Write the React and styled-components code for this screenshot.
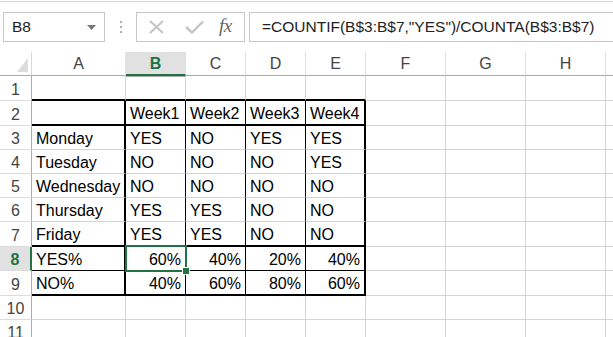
import styled, { createGlobalStyle } from "styled-components";

const GREEN = "#217346";
const GRID = "#d4d4d4";

const GlobalStyle = createGlobalStyle`
  html, body {
    margin: 0;
    padding: 0;
    background: #ffffff;
    overflow: hidden;
  }
  body {
    font-family: "Liberation Sans", Arial, sans-serif;
  }
`;

const columns = [
  { name: "A", width: 94 },
  { name: "B", width: 60 },
  { name: "C", width: 60 },
  { name: "D", width: 60 },
  { name: "E", width: 60 },
  { name: "F", width: 80 },
  { name: "G", width: 80 },
  { name: "H", width: 80 },
  { name: "", width: 40 },
];

const rowHeights = [25, 25, 24, 24, 24, 24, 25, 24, 25, 24, 24];

const data = {
  2: ["", "Week1", "Week2", "Week3", "Week4"],
  3: ["Monday", "YES", "NO", "YES", "YES"],
  4: ["Tuesday", "NO", "NO", "NO", "YES"],
  5: ["Wednesday", "NO", "NO", "NO", "NO"],
  6: ["Thursday", "YES", "YES", "NO", "NO"],
  7: ["Friday", "YES", "YES", "NO", "NO"],
  8: ["YES%", "60%", "40%", "20%", "40%"],
  9: ["NO%", "40%", "60%", "80%", "60%"],
};

function bottomBorder(row, col) {
  if (col > 4) return "grid";
  if (row === 1 || row === 2 || row === 7 || row === 9) return "thick";
  if (row === 8) return "thin";
  return "grid";
}

function rightBorder(row, col) {
  if (row < 2 || row > 9) return "grid";
  if (col === 0 || col === 4) return "thick";
  if (col < 4) return "thin";
  return "grid";
}

const borderValue = {
  grid: `1px solid ${GRID}`,
  thin: "1px solid #000000",
  thick: "2px solid #000000",
};

export default function App() {
  return (
    <>
      <GlobalStyle />
      <Page>
        <FormulaBar>
          <NameBox>
            <span>B8</span>
            <svg width="9" height="5" viewBox="0 0 9 5">
              <path d="M0 0 L9 0 L4.5 5 Z" fill="#777" />
            </svg>
          </NameBox>
          <Grip>
            <i />
            <i />
            <i />
          </Grip>
          <ButtonGroup>
            <svg width="17" height="14" viewBox="0 0 17 14">
              <path d="M2 1 L15 13 M15 1 L2 13" stroke="#c3c3c3" strokeWidth="2" fill="none" />
            </svg>
            <svg width="19" height="14" viewBox="0 0 19 14">
              <path d="M1 7 L7 12.5 L18 1.5" stroke="#c3c3c3" strokeWidth="2.4" fill="none" />
            </svg>
            <Fx>fx</Fx>
          </ButtonGroup>
          <FormulaInput>=COUNTIF(B$3:B$7,"YES")/COUNTA(B$3:B$7)</FormulaInput>
        </FormulaBar>

        <Sheet $cols={columns.map((c) => `${c.width}px`).join(" ")} $rows={rowHeights.map((h) => `${h}px`).join(" ")}>
          <Corner>
            <svg width="11" height="14" viewBox="0 0 11 14">
              <path d="M11 0 L11 14 L0 14 Z" fill="#dcdcdc" />
            </svg>
          </Corner>
          {columns.map((c) => (
            <ColHeader key={c.name + "h"} $active={c.name === "B"}>
              {c.name}
            </ColHeader>
          ))}

          {rowHeights.map((_, i) => {
            const row = i + 1;
            return [
              <RowHeader key={"r" + row} $active={row === 8}>
                {row}
              </RowHeader>,
              ...columns.map((c, col) => {
                const value = data[row] && col < 5 ? data[row][col] : "";
                const isPercent = value.endsWith("%") && col > 0;
                return (
                  <Cell
                    key={row + "-" + col}
                    $right={borderValue[rightBorder(row, col)]}
                    $bottom={borderValue[bottomBorder(row, col)]}
                    $align={isPercent ? "flex-end" : "flex-start"}
                  >
                    {value}
                    {row === 8 && col === 1 && (
                      <Selection>
                        <Handle />
                      </Selection>
                    )}
                  </Cell>
                );
              }),
            ];
          })}
        </Sheet>
      </Page>
    </>
  );
}

const Page = styled.div`
  width: 613px;
  height: 337px;
  overflow: hidden;
  border-top: 1px solid #d6d6d6;
  margin-top: 1px;
  box-sizing: border-box;
`;

const FormulaBar = styled.div`
  display: flex;
  align-items: center;
  height: 50px;
  padding: 9px 0 9px 3px;
  box-sizing: border-box;
  font-size: 15.5px;
  color: #222222;
`;

const NameBox = styled.div`
  display: flex;
  align-items: center;
  justify-content: space-between;
  width: 102px;
  height: 30px;
  box-sizing: border-box;
  border: 1px solid #c6c6c6;
  padding: 0 8px 1px 8px;

  svg {
    margin-top: 2px;
  }
`;

const Grip = styled.div`
  display: flex;
  flex-direction: column;
  align-items: center;
  gap: 3px;
  width: 31px;

  i {
    display: block;
    width: 2px;
    height: 2px;
    background: #b0b0b0;
  }
`;

const ButtonGroup = styled.div`
  display: flex;
  align-items: center;
  width: 109px;
  height: 30px;
  box-sizing: border-box;
  border: 1px solid #c6c6c6;
  padding: 0 0 0 11px;

  svg:first-child {
    margin-right: 20px;
  }
  svg:nth-child(2) {
    margin-right: 15px;
  }
`;

const Fx = styled.span`
  font-family: "Liberation Serif", "Times New Roman", serif;
  font-style: italic;
  font-size: 19px;
  color: #666666;
  letter-spacing: -0.5px;
  margin-top: -2px;
`;

const FormulaInput = styled.div`
  flex: 1;
  display: flex;
  align-items: center;
  height: 30px;
  box-sizing: border-box;
  margin-left: 4px;
  border: 1px solid #c6c6c6;
  border-right: none;
  padding: 0 0 1px 12px;
  white-space: nowrap;
  overflow: hidden;
`;

const Sheet = styled.div`
  display: grid;
  grid-template-columns: 32px ${(p) => p.$cols};
  grid-template-rows: 24px ${(p) => p.$rows};
  font-size: 16px;
  color: #000000;
`;

const Corner = styled.div`
  display: flex;
  align-items: flex-end;
  justify-content: flex-end;
  padding: 0 3px 3px 0;
  border-bottom: 1px solid #ababab;
  border-right: 1px solid #d8d8d8;
`;

const ColHeader = styled.div`
  display: flex;
  align-items: center;
  justify-content: center;
  box-sizing: border-box;
  font-size: 16px;
  padding-top: 1px;
  color: ${(p) => (p.$active ? GREEN : "#444444")};
  font-weight: ${(p) => (p.$active ? 700 : 400)};
  background: ${(p) => (p.$active ? "#e1e1e1" : "#ffffff")};
  border-right: 1px solid #e0e0e0;
  border-bottom: ${(p) => (p.$active ? `2px solid ${GREEN}` : "1px solid #ababab")};
  box-shadow: ${(p) => (p.$active ? "0 1px 0 #ababab" : "none")};
`;

const RowHeader = styled.div`
  display: flex;
  align-items: flex-end;
  justify-content: center;
  box-sizing: border-box;
  padding-bottom: 1px;
  line-height: 18px;
  font-size: 16px;
  color: ${(p) => (p.$active ? GREEN : "#444444")};
  font-weight: ${(p) => (p.$active ? 700 : 400)};
  background: ${(p) => (p.$active ? "#e1e1e1" : "#ffffff")};
  border-bottom: 1px solid #dcdcdc;
  border-right: ${(p) => (p.$active ? `2px solid ${GREEN}` : "1px solid #ababab")};
`;

const Cell = styled.div`
  position: relative;
  display: flex;
  align-items: flex-end;
  justify-content: ${(p) => p.$align};
  box-sizing: border-box;
  padding: 0 4px 1px 4px;
  line-height: 18px;
  white-space: nowrap;
  border-right: ${(p) => p.$right};
  border-bottom: ${(p) => p.$bottom};
`;

const Selection = styled.div`
  position: absolute;
  top: -2px;
  left: -1px;
  right: -2px;
  bottom: -2px;
  border: 2px solid ${GREEN};
  pointer-events: none;
  z-index: 2;
`;

const Handle = styled.div`
  position: absolute;
  right: -5px;
  bottom: -5px;
  width: 6px;
  height: 6px;
  background: ${GREEN};
  border: 1px solid #ffffff;
`;
